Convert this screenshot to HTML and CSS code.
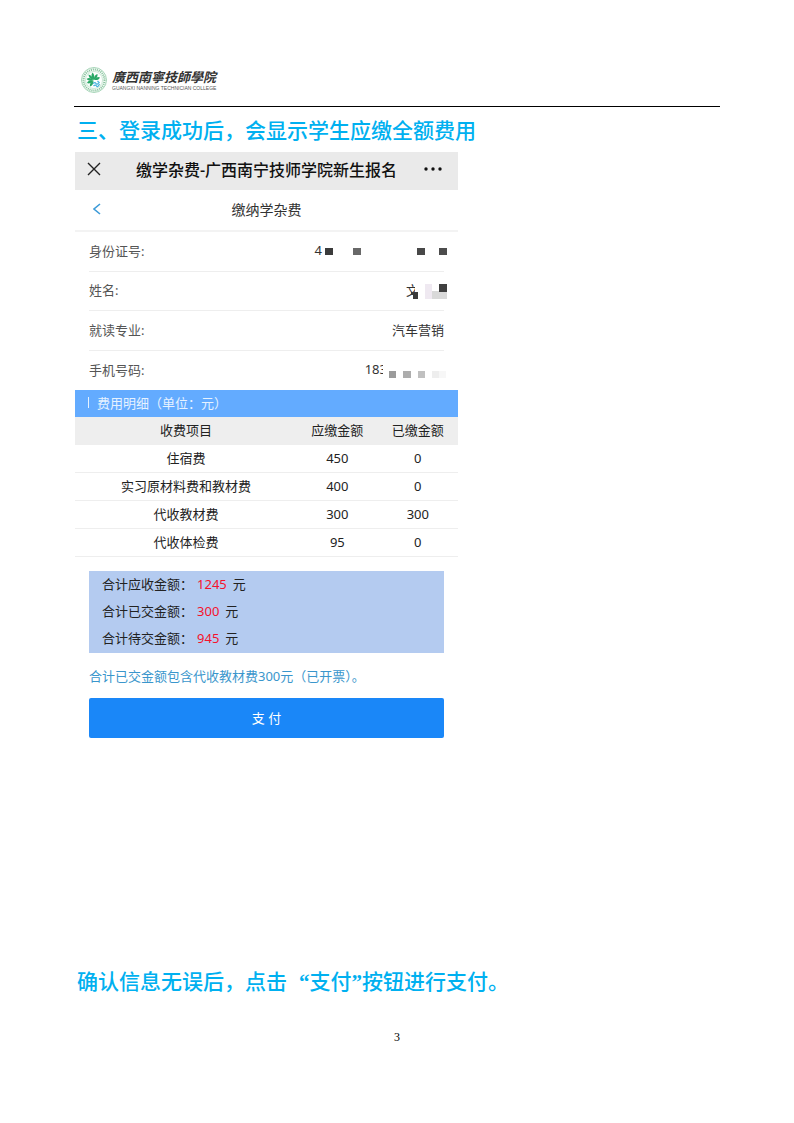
FILE: index.html
```html
<!DOCTYPE html>
<html lang="zh-CN">
<head>
    <meta charset="UTF-8">
    <meta name="viewport" content="width=device-width, initial-scale=1.0">
    <title>缴学杂费</title>
    <link rel="stylesheet" href="styles.css">
</head>
<body>
    <header class="page-header">
        <svg class="emblem" viewBox="0 0 52 52" aria-hidden="true">
            <circle cx="26" cy="26" r="25" fill="#f3faf5" stroke="#8cc8a3" stroke-width="1.5"/>
            <circle cx="26" cy="26" r="21" fill="none" stroke="#84c09b" stroke-width="4" stroke-dasharray="2 2"/>
            <circle cx="26" cy="26" r="17" fill="#fff" stroke="#a5d6b7" stroke-width="1"/>
            <g fill="#2aa866">
                <path d="M25 26Q18 18 23 11Q29 17 25 26Z"/>
                <path d="M25 26Q26 16 33 14Q34 22 25 26Z"/>
                <path d="M25 26Q15 23 15 15Q23 17 25 26Z"/>
                <path d="M25 26Q16 30 11 24Q17 19 25 26Z"/>
                <path d="M25 27Q18 35 12 32Q15 25 25 27Z"/>
                <path d="M25 27Q25 37 18 39Q16 32 25 27Z"/>
                <path d="M26 26Q31 18 38 21Q36 27 26 26Z"/>
            </g>
            <path d="M24 33q4-4 6 0t7-3M25 38q4-4 6 0t6-4M33 28l4 4" fill="none" stroke="#4bb5dd" stroke-width="2.5"/>
        </svg>
        <div class="school">
            <p class="school-name" lang="zh-TW">廣西南寧技師學院</p>
            <p class="school-en">GUANGXI NANNING TECHNICIAN COLLEGE</p>
        </div>
    </header>

    <main class="content">
        <h1 class="step">三、登录成功后，会显示学生应缴全额费用</h1>

        <section class="phone">
            <div class="title-bar">
                <button class="icon-btn" aria-label="关闭">
                    <svg width="14" height="14" viewBox="0 0 14 14"><path d="M1 1L13 13M13 1L1 13" fill="none" stroke="#222" stroke-width="1.4"/></svg>
                </button>
                <span class="title">缴学杂费-广西南宁技师学院新生报名</span>
                <button class="icon-btn" aria-label="更多">
                    <svg width="18" height="14" viewBox="0 0 18 14" fill="#111"><circle cx="2" cy="7" r="1.7"/><circle cx="9" cy="7" r="1.7"/><circle cx="16" cy="7" r="1.7"/></svg>
                </button>
            </div>
            <div class="nav-bar">
                <a class="back" href="#" aria-label="返回">
                    <svg width="8" height="12" viewBox="0 0 8 12"><path d="M7 1L1 6L7 11" fill="none" stroke="#3d9bd8" stroke-width="1.6"/></svg>
                </a>
                <h2 class="nav-title">缴纳学杂费</h2>
            </div>

            <dl class="info">
                <div class="info-row">
                    <dt>身份证号:</dt>
                    <dd>4<svg class="mosaic" width="125" height="30" viewBox="0 0 125 30" aria-hidden="true">
                        <path d="M3 13h8v7H3z" fill="#3b3b3b"/>
                        <path d="M31 13h8v7h-8z" fill="#686868"/>
                        <path d="M95 13h8v7h-8z" fill="#484848"/>
                        <path d="M117 13h8v7h-8z" fill="#4c4c4c"/>
                    </svg></dd>
                </div>
                <div class="info-row">
                    <dt>姓名:</dt>
                    <dd>文<svg class="mosaic over-name" width="36" height="30" viewBox="0 0 36 30" aria-hidden="true">
                        <path d="M4 6h6v18H4z" fill="#fff"/>
                        <path d="M0 17h7v7H2v-4H0z" fill="#3b3b3b"/>
                        <path d="M14 9h7v15h-7z" fill="#efe9f1"/>
                        <path d="M21 16h15v8H21z" fill="#d9d9d9"/>
                        <path d="M28 9h8v8h-8z" fill="#404040"/>
                    </svg></dd>
                </div>
                <div class="info-row">
                    <dt>就读专业:</dt>
                    <dd>汽车营销</dd>
                </div>
                <div class="info-row">
                    <dt>手机号码:</dt>
                    <dd>183<svg class="mosaic over-phone" width="64" height="30" viewBox="0 0 64 30" aria-hidden="true">
                        <path d="M0 6h5v18H0z" fill="#fff"/>
                        <path d="M6 17h7v7H6z" fill="#9b9b9b"/>
                        <path d="M20 17h8v7h-8z" fill="#adadad"/>
                        <path d="M35 17h7v7h-7z" fill="#c0c0c0"/>
                        <path d="M49 17h7v7h-7z" fill="#eee"/>
                        <path d="M56 17h7v7h-7z" fill="#f7f7f7"/>
                    </svg></dd>
                </div>
            </dl>

            <h3 class="detail-title">费用明细（单位：元）</h3>
            <table class="fees">
                <thead>
                    <tr><th class="item">收费项目</th><th>应缴金额</th><th>已缴金额</th></tr>
                </thead>
                <tbody>
                    <tr><td>住宿费</td><td>450</td><td>0</td></tr>
                    <tr><td>实习原材料费和教材费</td><td>400</td><td>0</td></tr>
                    <tr><td>代收教材费</td><td>300</td><td>300</td></tr>
                    <tr><td>代收体检费</td><td>95</td><td>0</td></tr>
                </tbody>
            </table>

            <div class="totals">
                <p>合计应收金额：<span class="amount">1245</span>元</p>
                <p>合计已交金额：<span class="amount">300</span>元</p>
                <p>合计待交金额：<span class="amount">945</span>元</p>
            </div>
            <p class="note">合计已交金额包含代收教材费300元（已开票）。</p>
            <button class="pay">支 付</button>
        </section>

        <p class="step">确认信息无误后，点击<span class="quote open">“</span>支付<span class="quote">”</span>按钮进行支付。</p>
    </main>

    <footer class="page-number">3</footer>
</body>
</html>
```
FILE: styles.css
```css
* {
    margin: 0;
    padding: 0;
    box-sizing: border-box;
}

body {
    padding: 64px 74px 0;
    background: #fff;
    color: #222;
    font-family: "Noto Sans", "Noto Sans CJK SC", sans-serif;
    font-size: 13px;
}

button {
    border: none;
    background: none;
    font: inherit;
    cursor: pointer;
}

svg {
    display: block;
}

.page-header {
    display: flex;
    align-items: center;
    gap: 5px;
    height: 43px;
    padding: 0 7px 10px;
    border-bottom: 1px solid #000;
}

.emblem {
    width: 26px;
    height: 26px;
}

.school-name {
    color: #333;
    font-family: "Noto Sans CJK TC", sans-serif;
    font-size: 13px;
    font-style: italic;
    font-weight: 700;
    line-height: 16px;
}

.school-en {
    color: #555;
    font-family: "Liberation Sans", sans-serif;
    font-size: 5px;
    line-height: 6px;
}

.step {
    padding: 0 3px;
    color: #00b0f0;
    font-family: "Noto Sans CJK SC", sans-serif;
    font-size: 21px;
    font-weight: 500;
    line-height: 44px;
}

.quote {
    font-family: "Liberation Serif", serif;
    font-weight: 700;
}

.quote.open {
    padding-left: 12px;
}

.phone {
    max-width: 384px;
    margin: 1px 0 220px;
    padding-left: 1px;
}

.title-bar {
    display: flex;
    align-items: center;
    justify-content: space-between;
    height: 38px;
    padding: 0 16px 5px 12px;
    background: #eaeaea;
}

.title {
    padding-left: 8px;
    color: #111;
    font-size: 16px;
    font-weight: 500;
}

.nav-bar {
    display: grid;
    grid-template-columns: 20px 1fr 20px;
    align-items: center;
    height: 42px;
    padding: 0 18px 2px;
    border-bottom: 2px solid #f3f3f3;
}

.nav-title {
    color: #333;
    font-size: 14px;
    font-weight: 400;
    text-align: center;
}

.info {
    padding: 0 14px;
}

.info-row {
    display: flex;
    align-items: center;
    justify-content: space-between;
    height: 40px;
    padding-bottom: 3px;
    border-bottom: 1px solid #eee;
}

.info-row:nth-child(2) {
    height: 39px;
}

.info-row:last-child {
    height: 39px;
    border-bottom: none;
}

.info dt {
    color: #555;
}

.info dd {
    display: flex;
    align-items: center;
    color: #333;
}

/* hidden digits and characters, drawn over the end of the value */
.mosaic {
    position: relative;
    margin-right: -3px;
}

.over-name {
    margin-left: -8px;
}

.over-phone {
    margin-left: -4px;
}

.detail-title {
    display: flex;
    align-items: center;
    gap: 8px;
    height: 27px;
    padding: 0 13px 2px;
    background: #63abff;
    color: #e6f2ff;
    font-size: 13px;
    font-weight: 400;
}

.detail-title::before {
    content: "";
    width: 1px;
    height: 11px;
    background: #e6f2ff;
}

.fees {
    width: 100%;
    border-spacing: 0;
    table-layout: fixed;
}

.fees th,
.fees td {
    height: 28px;
    padding-bottom: 1px;
    border-bottom: 1px solid #eee;
    font-weight: 400;
    line-height: 18px;
    text-align: center;
}

.fees th {
    background: #eee;
}

.fees .item {
    width: 58%;
}

.totals {
    margin: 14px 14px 0;
    padding: 0 13px 1px;
    background: #b4cbf0;
    line-height: 27px;
}

.amount {
    margin-right: 6px;
    padding-left: 4px;
    color: #f5122c;
}

.note {
    margin: 13px 14px 0;
    color: #3a96cc;
    line-height: 20px;
}

.pay {
    display: block;
    width: calc(100% - 28px);
    height: 40px;
    margin: 12px 14px 0;
    padding-bottom: 2px;
    border-radius: 2px;
    background: #1a87f8;
    color: #fff;
}

.page-number {
    margin-top: 26px;
    color: #000;
    font-family: "Liberation Serif", serif;
    font-size: 12px;
    text-align: center;
}
```
